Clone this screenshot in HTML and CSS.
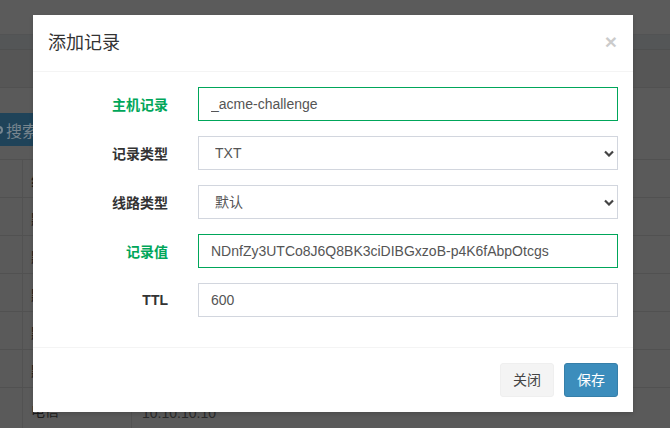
FILE: index.html
```html
<!DOCTYPE html>
<html lang="zh-CN">
<head>
<meta charset="utf-8">
<title>添加记录</title>
<link rel="stylesheet" href="styles.css">
</head>
<body>
<div class="page">
  <div class="topbar"></div>
  <div class="navband"></div>
  <div class="toolband"></div>
  <div class="searchrow">
    <span class="searchbtn"><span class="searchicon"></span>搜索</span>
  </div>
  <div class="table">
    <div class="trow head"><span class="c1"></span><span class="c2">线</span></div>
    <div class="trow"><span class="c1"></span><span class="c2">默</span></div>
    <div class="trow"><span class="c1"></span><span class="c2">默</span></div>
    <div class="trow"><span class="c1"></span><span class="c2">默</span></div>
    <div class="trow"><span class="c1"></span><span class="c2">默</span></div>
    <div class="trow"><span class="c1"></span><span class="c2">默</span></div>
    <div class="trow last"><span class="c1"></span><span class="c2">电信</span><span class="c3">10.10.10.10</span></div>
  </div>
</div>

<div class="modal">
  <div class="modal-header">
    <h4 class="modal-title">添加记录</h4>
    <span class="close">×</span>
  </div>
  <div class="modal-body">
    <div class="form-group has-success">
      <label class="control-label">主机记录</label>
      <div class="ctrl"><input class="form-control" type="text" value="_acme-challenge"></div>
    </div>
    <div class="form-group">
      <label class="control-label">记录类型</label>
      <div class="ctrl select-wrap">
        <select class="form-control"><option>TXT</option></select>
        <svg class="chev" width="10" height="7" viewBox="0 0 10 7"><polyline points="1,1.5 5,5.5 9,1.5" fill="none" stroke="#444" stroke-width="2.2"/></svg>
      </div>
    </div>
    <div class="form-group">
      <label class="control-label">线路类型</label>
      <div class="ctrl select-wrap">
        <select class="form-control"><option>默认</option></select>
        <svg class="chev" width="10" height="7" viewBox="0 0 10 7"><polyline points="1,1.5 5,5.5 9,1.5" fill="none" stroke="#444" stroke-width="2.2"/></svg>
      </div>
    </div>
    <div class="form-group has-success">
      <label class="control-label">记录值</label>
      <div class="ctrl"><input class="form-control" type="text" value="NDnfZy3UTCo8J6Q8BK3ciDIBGxzoB-p4K6fAbpOtcgs"></div>
    </div>
    <div class="form-group">
      <label class="control-label">TTL</label>
      <div class="ctrl"><input class="form-control" type="text" value="600"></div>
    </div>
  </div>
  <div class="modal-footer">
    <button class="btn btn-default" type="button">关闭</button>
    <button class="btn btn-primary" type="button">保存</button>
  </div>
</div>
</body>
</html>
```

FILE: styles.css
```css
* { box-sizing: border-box; }

html, body {
  margin: 0;
  padding: 0;
}

body {
  width: 670px;
  height: 428px;
  overflow: hidden;
  background: #595959;
  font-family: "Liberation Sans", Arial, "Noto Sans CJK SC", sans-serif;
  font-size: 14px;
  color: #333;
  position: relative;
}

/* ---------- dimmed page behind the modal ---------- */
.page {
  width: 670px;
  height: 428px;
  display: flex;
  flex-direction: column;
}

.topbar {
  height: 35px;
  background: #5b5b5b;
  border-bottom: 1px solid #525354;
}

.navband {
  height: 15px;
  background: #545657;
  border-bottom: 1px solid #4f5050;
}

.toolband {
  height: 38px;
  background: #565656;
  border-bottom: 1px solid #515151;
}

.searchrow {
  height: 71px;
  padding-top: 25px;
  background: #5a5a5a;
}

.searchbtn {
  display: flex;
  align-items: center;
  gap: 3px;
  width: 60px;
  height: 33px;
  margin-left: -13px;
  padding-left: 8px;
  background: #1f4359;
  color: #77858e;
  font-size: 16px;
}

.searchicon {
  width: 8px;
  height: 8px;
  border: 2px solid #77858e;
  border-radius: 50%;
}

.table {
  display: flex;
  flex-direction: column;
}

.trow {
  height: 38px;
  display: flex;
  border-top: 1px solid #515151;
  background: #5a5a5a;
}

.trow .c1 {
  width: 23px;
  border-right: 1px solid #525252;
}

.trow .c2 {
  width: 109px;
  padding-left: 8px;
  padding-top: 10px;
  color: #1c1c1c;
  font-size: 14px;
  font-weight: bold;
  border-right: 1px solid #525252;
}

.trow.last {
  height: 41px;
}

.trow.last .c2 {
  padding-top: 12px;
  font-weight: normal;
}

.trow .c3 {
  padding-left: 10px;
  padding-top: 17px;
  color: #2a2a2a;
}

/* ---------- modal ---------- */
.modal {
  position: absolute;
  left: 33px;
  top: 15px;
  width: 600px;
  background: #fff;
  box-shadow: 0 2px 4px rgba(0, 0, 0, 0.15);
}

.modal-header {
  display: flex;
  justify-content: space-between;
  align-items: flex-start;
  padding: 15px;
  border-bottom: 1px solid #f4f4f4;
}

.modal-title {
  margin: 0;
  font-size: 18px;
  line-height: 26px;
  font-weight: normal;
  color: #333;
}

.close {
  font-size: 21px;
  font-weight: bold;
  line-height: 1;
  color: #000;
  opacity: 0.2;
  margin-top: 1px;
  margin-right: 1px;
}

.modal-body {
  padding: 15px;
}

.form-group {
  display: flex;
  align-items: center;
  margin: 0 -15px 15px;
}

.control-label {
  width: 150px;
  padding: 0 15px;
  text-align: right;
  font-weight: bold;
  font-size: 14px;
  color: #333;
}

.has-success .control-label {
  color: #00a65a;
}

.ctrl {
  width: 450px;
  padding: 0 15px;
  position: relative;
}

.form-control {
  display: block;
  width: 100%;
  height: 34px;
  padding: 6px 12px;
  font-family: "Liberation Sans", Arial, "Noto Sans CJK SC", sans-serif;
  font-size: 14px;
  line-height: 20px;
  color: #555;
  background: #fff;
  border: 1px solid #d2d6de;
  border-radius: 0;
  outline: none;
  margin: 0;
}

.has-success .form-control {
  border-color: #00a65a;
}

select.form-control {
  -webkit-appearance: none;
  appearance: none;
  padding-left: 16px;
}

.chev {
  position: absolute;
  right: 19px;
  top: 14px;
}

.modal-footer {
  display: flex;
  justify-content: flex-end;
  gap: 10px;
  padding: 15px;
  border-top: 1px solid #f4f4f4;
}

.btn {
  height: 34px;
  padding: 6px 12px;
  font-family: "Liberation Sans", Arial, "Noto Sans CJK SC", sans-serif;
  font-size: 14px;
  line-height: 20px;
  border-radius: 3px;
  border: 1px solid transparent;
  margin: 0;
}

.btn-default {
  background: #f4f4f4;
  color: #444;
  border-color: #efefef;
}

.btn-primary {
  background: #3c8dbc;
  color: #fff;
  border-color: #367fa9;
}
```
